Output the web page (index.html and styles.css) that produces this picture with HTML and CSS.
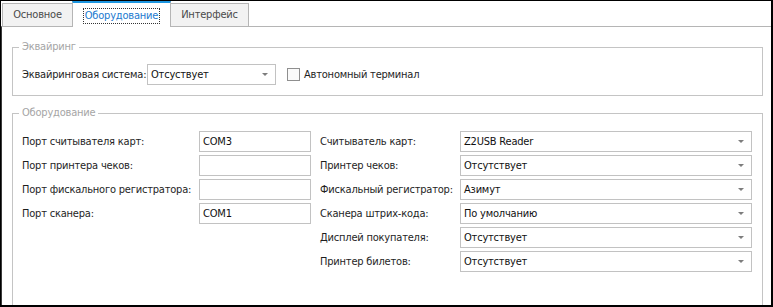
FILE: index.html
```html
<!DOCTYPE html>
<html lang="ru">
<head>
    <meta charset="UTF-8" />
    <title>Настройки оборудования</title>
    <link rel="stylesheet" href="styles.css">
</head>
<body>

    <div class="okno">
        <div class="vkladki">
            <div class="vkladka osnovnoe">Основное</div>
            <div class="vkladka aktivnaya"><span class="fokus">Оборудование</span></div>
            <div class="vkladka interfeis">Интерфейс</div>
        </div>

        <div class="panel">
            <fieldset class="gruppa ekvairing">
                <legend>Эквайринг</legend>
                <div class="stroka">
                    <span class="metka">Эквайринговая система:</span>
                    <div class="spisok ekv-spisok"><span>Отсуствует</span><i class="strelka"></i></div>
                    <label class="flazhok"><span class="kvadrat"></span>Автономный терминал</label>
                </div>
            </fieldset>

            <fieldset class="gruppa oborudovanie">
                <legend>Оборудование</legend>
                <div class="kolonki">
                    <div class="kolonka levaya">
                        <div class="stroka">
                            <span class="metka">Порт считывателя карт:</span>
                            <div class="pole">COM3</div>
                        </div>
                        <div class="stroka">
                            <span class="metka">Порт принтера чеков:</span>
                            <div class="pole"></div>
                        </div>
                        <div class="stroka">
                            <span class="metka">Порт фискального регистратора:</span>
                            <div class="pole"></div>
                        </div>
                        <div class="stroka">
                            <span class="metka">Порт сканера:</span>
                            <div class="pole">COM1</div>
                        </div>
                    </div>

                    <div class="kolonka pravaya">
                        <div class="stroka">
                            <span class="metka">Считыватель карт:</span>
                            <div class="spisok"><span>Z2USB Reader</span><i class="strelka"></i></div>
                        </div>
                        <div class="stroka">
                            <span class="metka">Принтер чеков:</span>
                            <div class="spisok"><span>Отсутствует</span><i class="strelka"></i></div>
                        </div>
                        <div class="stroka">
                            <span class="metka">Фискальный регистратор:</span>
                            <div class="spisok"><span>Азимут</span><i class="strelka"></i></div>
                        </div>
                        <div class="stroka">
                            <span class="metka">Сканера штрих-кода:</span>
                            <div class="spisok"><span>По умолчанию</span><i class="strelka"></i></div>
                        </div>
                        <div class="stroka">
                            <span class="metka">Дисплей покупателя:</span>
                            <div class="spisok"><span>Отсутствует</span><i class="strelka"></i></div>
                        </div>
                        <div class="stroka">
                            <span class="metka">Принтер билетов:</span>
                            <div class="spisok"><span>Отсутствует</span><i class="strelka"></i></div>
                        </div>
                    </div>
                </div>
            </fieldset>
        </div>
    </div>

</body>
</html>
```

FILE: styles.css
```css
* {
    box-sizing: border-box;
}

body {
    margin: 0;
    font-family: "DejaVu Sans", "Liberation Sans", sans-serif;
    font-stretch: condensed;
    font-size: 11px;
    letter-spacing: -0.2px;
    color: #1e1e1e;
    background: #ffffff;
}

.okno {
    width: 773px;
    height: 307px;
    border: 1px solid #000;
    border-right-width: 2px;
    border-bottom-width: 2px;
    overflow: hidden;
    display: flex;
    flex-direction: column;
}

/* вкладки */
.vkladki {
    display: flex;
    align-items: flex-end;
    height: 26px;
    padding-left: 1px;
}

.vkladka {
    height: 23px;
    margin-right: -1px;
    line-height: 21px;
    text-align: center;
    border: 1px solid #b5b5b5;
    border-bottom: none;
    background: #f2f2f2;
    color: #4a4a4a;
}

    .vkladka.osnovnoe {
        width: 71px;
    }

    .vkladka.interfeis {
        width: 79px;
    }

    .vkladka.aktivnaya {
        position: relative;
        z-index: 1;
        width: 99px;
        height: 26px;
        margin-bottom: -1px;
        border-top: 2px solid #1b95e0;
        background: #fff;
        color: #1c7ad0;
        padding-top: 2px;
    }

.fokus {
    border: 1px dotted #333;
    padding: 0 1px 1px 1px;
}

.panel {
    flex: 1;
    border: 1px solid #b5b5b5;
    border-left-color: #3a3a3a;
    border-bottom: none;
    border-right: none;
}

/* группы */
.gruppa {
    margin: 0 8px 0 10px;
    padding: 0 10px 0 9px;
    border: 1px solid #c4c4c4;
}

    .gruppa legend {
        padding: 0 3px;
        margin-left: -3px;
        line-height: 14px;
        color: #a5a5a5;
    }

.ekvairing {
    margin-top: 13px;
    padding-top: 10px;
    padding-bottom: 10px;
}

.oborudovanie {
    margin-top: 10px;
    padding-top: 11px;
    height: 220px;
}

.stroka {
    display: flex;
    align-items: center;
    height: 21px;
}

.kolonka .stroka + .stroka {
    margin-top: 3px;
}

.metka {
    white-space: nowrap;
}

/* поля и списки */
.pole,
.spisok {
    height: 21px;
    border: 1px solid #c2c2c2;
    padding: 0 3px;
    line-height: 19px;
    background: #fff;
    color: #111;
}

.spisok {
    display: flex;
    justify-content: space-between;
    align-items: center;
}

.strelka {
    width: 0;
    height: 0;
    margin-right: 4px;
    border-left: 3px solid transparent;
    border-right: 3px solid transparent;
    border-top: 3px solid #7d7d7d;
}

.ekvairing .metka {
    width: 125px;
}

.ekv-spisok {
    width: 129px;
}

.flazhok {
    display: flex;
    align-items: center;
    margin-left: 11px;
}

.kvadrat {
    width: 13px;
    height: 13px;
    border: 1px solid #8f8f8f;
    background: #fafafa;
    margin-right: 4px;
}

.kolonki {
    display: flex;
}

.levaya .metka {
    width: 177px;
}

.levaya .pole {
    width: 112px;
}

.pravaya {
    flex: 1;
    margin-left: 9px;
}

    .pravaya .metka {
        width: 140px;
    }

    .pravaya .spisok {
        flex: 1;
    }
```
